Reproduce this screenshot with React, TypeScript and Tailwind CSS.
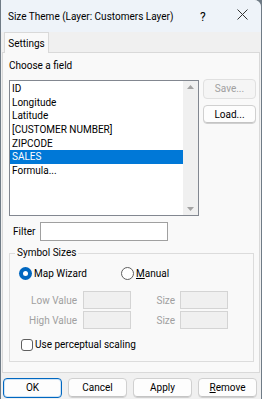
import React from "react";

const font = { fontFamily: 'Roboto, "Noto Sans", sans-serif' };

function Btn({ children, w = "w-[59px]", disabled = false, primary = false, h = "h-[20px]" }: { children: React.ReactNode; w?: string; disabled?: boolean; primary?: boolean; h?: string }) {
  return (
    <div
      className={`${w} ${h} shrink-0 flex items-center justify-center rounded-[4px] border text-[10px] leading-none whitespace-nowrap ${
        disabled
          ? "border-[#e0e0e0] bg-[#f5f5f5] text-[#a0a0a0]"
          : primary
          ? "border-[#0067c0] bg-[#fdfdfd] text-black shadow-[inset_0_0_0_1px_#cfe3f5]"
          : "border-[#d0d0d0] bg-[#fdfdfd] text-black shadow-[inset_0_-1px_0_#c4c4c4]"
      }`}
    >
      {children}
    </div>
  );
}

const items = ["ID", "Longitude", "Latitude", "[CUSTOMER NUMBER]", "ZIPCODE", "SALES", "Formula..."];

export default function App() {
  return (
    <div className="w-[262px] h-[399px] overflow-hidden bg-[#6f7b86] whitespace-nowrap" style={font}>
      <div className="ml-[1px] w-[260px] h-[399px] bg-[#f0f0f0] rounded-tr-[7px] overflow-hidden flex flex-col">
        {/* Title bar */}
        <div className="h-[32px] shrink-0 bg-[#eef3f9] flex items-center text-[10px] text-black relative">
          <span className="pl-[7px]">Size Theme (Layer: Customers Layer)</span>
          <span className="absolute left-[199px] top-[8px] text-[12px]">?</span>
          <svg className="absolute left-[236px] top-[9px]" width="11" height="11" viewBox="0 0 11 11">
            <path d="M0.5 0.5 L10.5 10.5 M10.5 0.5 L0.5 10.5" stroke="#333" strokeWidth="1" />
          </svg>
        </div>
        {/* Tab row */}
        <div className="h-[20px] shrink-0 flex items-end pl-[3px] relative z-10">
          <div className="w-[45px] h-[21px] bg-[#f9f9f9] border border-b-0 border-[#d9d9d9] flex items-center justify-center text-[10px] text-black -mb-[1px]">
            Settings
          </div>
        </div>
        {/* Panel */}
        <div className="ml-[1px] w-[258px] h-[321px] shrink-0 border border-[#d9d9d9] bg-[#f9f9f9] pl-[6px] flex flex-col">
          <div className="mt-[6px] h-[14px] leading-[14px] text-[10px] text-black">Choose a field</div>
          <div className="mt-[7px] flex items-start">
            <div className="w-[190px] h-[136px] shrink-0 border border-[#828790] bg-white flex">
              <div className="flex-1 pt-[1px] text-[10px] text-black">
                {items.map((it) => (
                  <div
                    key={it}
                    className={`h-[13.67px] leading-[13.67px] pl-[2px] ${it === "SALES" ? "bg-[#0078d7] text-white" : ""}`}
                  >
                    {it}
                  </div>
                ))}
              </div>
              <div className="w-[15px] bg-[#f0f0f0] flex flex-col items-center justify-between py-[4px]">
                <svg width="7" height="4" viewBox="0 0 7 4"><path d="M0 4 L3.5 0 L7 4 Z" fill="#a3a3a3" /></svg>
                <svg width="7" height="4" viewBox="0 0 7 4"><path d="M0 0 L3.5 4 L7 0 Z" fill="#a3a3a3" /></svg>
              </div>
            </div>
            <div className="ml-[4px] -mt-[1px] flex flex-col gap-[6px]">
              <Btn w="w-[53px]" disabled>Save...</Btn>
              <Btn w="w-[53px]" h="h-[19px]">Load...</Btn>
            </div>
          </div>
          <div className="mt-[6px] flex items-center">
            <span className="pl-[4px] w-[31px] text-[10px] text-black">Filter</span>
            <div className="w-[128px] h-[19px] border border-[#a0a0a0] bg-white" />
          </div>
          {/* Group box */}
          <div className="mt-[12px] w-[245px] h-[109px] shrink-0 border border-[#dcdcdc] relative pl-[9px] flex flex-col">
            <span className="absolute left-[5px] -top-[8px] px-[2px] bg-[#f9f9f9] text-[10px] leading-[14px] text-black">Symbol Sizes</span>
            <div className="mt-[13px] flex items-center h-[13px] text-[10px] text-black">
              <div className="w-[102px] flex items-center">
                <div className="w-[13px] h-[13px] rounded-full bg-[#0067c0] flex items-center justify-center">
                  <div className="w-[5px] h-[5px] rounded-full bg-white" />
                </div>
                <span className="ml-[2px]">Map Wizard</span>
              </div>
              <div className="w-[13px] h-[13px] rounded-full border border-[#5f5f5f] bg-white" />
              <span className="ml-[2px]">
                <span className="underline">M</span>anual
              </span>
            </div>
            <div className="mt-[11px] -ml-[9px] flex items-center text-[10px] text-[#a0a0a0]">
              <span className="w-[73px] text-right pr-[6px]">Low Value</span>
              <div className="w-[48px] h-[18px] border border-[#d4d4d4] bg-[#f0f0f0]" />
              <span className="w-[49px] text-right pr-[5px]">Size</span>
              <div className="w-[48px] h-[18px] border border-[#d4d4d4] bg-[#f0f0f0]" />
            </div>
            <div className="mt-[2px] -ml-[9px] flex items-center text-[10px] text-[#a0a0a0]">
              <span className="w-[73px] text-right pr-[6px]">High Value</span>
              <div className="w-[48px] h-[18px] border border-[#d4d4d4] bg-[#f0f0f0]" />
              <span className="w-[49px] text-right pr-[5px]">Size</span>
              <div className="w-[48px] h-[18px] border border-[#d4d4d4] bg-[#f0f0f0]" />
            </div>
            <div className="mt-[8px] ml-[2px] flex items-center text-[10px] text-black">
              <div className="w-[12px] h-[12px] rounded-[3px] border border-[#5f5f5f] bg-white" />
              <span className="ml-[2px]">Use perceptual scaling</span>
            </div>
          </div>
        </div>
        {/* Bottom buttons */}
        <div className="mt-[5px] pl-[2px] flex gap-[6px]">
          <Btn primary>OK</Btn>
          <Btn>Cancel</Btn>
          <Btn>Apply</Btn>
          <Btn>
            <span>
              <span className="underline">R</span>emove
            </span>
          </Btn>
        </div>
      </div>
    </div>
  );
}
